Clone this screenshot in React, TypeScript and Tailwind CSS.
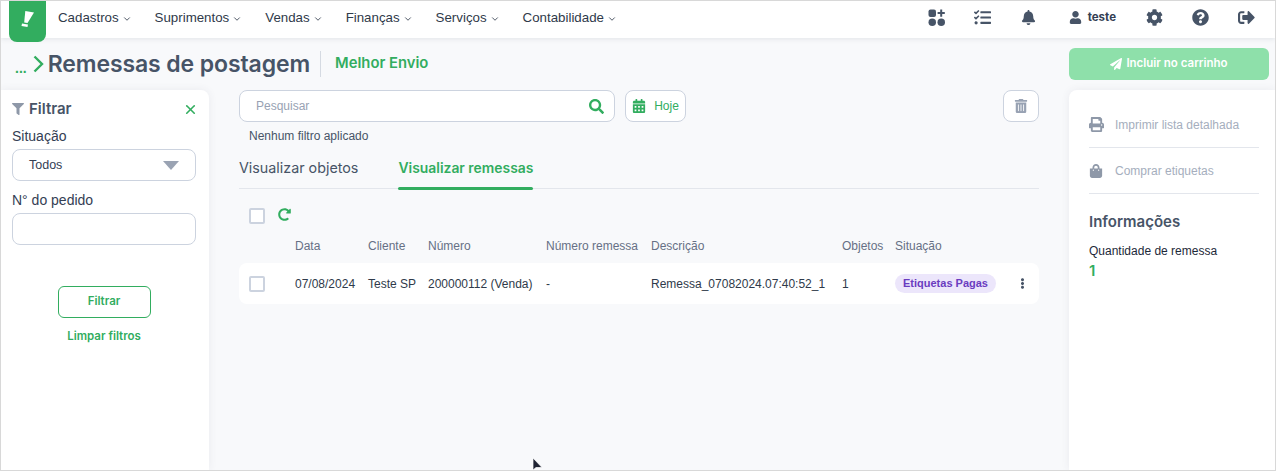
import { ChevronDown, X } from "lucide-react";
import {
  FaBell,
  FaCalendarAlt,
  FaCog,
  FaEllipsisV,
  FaFilter,
  FaPaperPlane,
  FaPrint,
  FaQuestionCircle,
  FaRedoAlt,
  FaSearch,
  FaShoppingBag,
  FaSignOutAlt,
  FaTasks,
  FaTrashAlt,
  FaUser,
} from "react-icons/fa";

const menu = ["Cadastros", "Suprimentos", "Vendas", "Finanças", "Serviços", "Contabilidade"];
const head = "font-['Inter',sans-serif]";
const columns = "grid grid-cols-[46px_73px_60px_118px_105px_191px_53px_122px_1fr] items-center";

function Logo() {
  return (
    <div className="self-start flex h-[41px] w-[37px] justify-center rounded-b-lg bg-[#32ad5f] pt-[9px]">
      <svg width="13" height="17" viewBox="0 0 13 17" fill="white">
        <path d="M4.3 1 L13 2.5 L6.5 13 L3.2 12.5 Z" />
        <path d="M1 13.6 L7 14.6 L6.5 17 L0.5 16 Z" />
      </svg>
    </div>
  );
}

function AppsIcon() {
  return (
    <svg width="17" height="17" viewBox="0 0 17 17" fill="#475467">
      <rect x="0.5" y="0.5" width="7.5" height="7.5" rx="2" />
      <rect x="0.5" y="9.5" width="7.5" height="7.5" rx="3.75" />
      <rect x="9.5" y="9.5" width="7.5" height="7.5" rx="3.75" />
      <path d="M12.2 0.5h2v2.6h2.6v2h-2.6v2.6h-2V5.1H9.6v-2h2.6z" />
    </svg>
  );
}

function Checkbox() {
  return <div className="h-4 w-4 border-2 border-[#ccd3df] bg-white rounded-[2px]" />;
}

export default function App() {
  return (
    <div className="relative flex h-[471px] w-[1276px] flex-col overflow-hidden border border-[#d8d8d8] bg-[#f8f9fb] font-['Liberation_Sans',sans-serif]">
      <header className="z-10 flex h-[37px] shrink-0 items-center bg-white pl-2 pr-[20px] shadow-[0_1px_5px_rgba(60,70,90,0.12)]">
        <Logo />
        <nav className="ml-3 mb-1 flex items-center gap-[23px] text-[13.3px] text-[#2f3a4a]">
          {menu.map((item) => (
            <span key={item} className="flex items-center gap-[3px]">
              {item}
              <ChevronDown size={10} className="mt-[2px]" />
            </span>
          ))}
        </nav>
        <div className="ml-auto mb-1 flex items-center text-[#475467]">
          <AppsIcon />
          <FaTasks size={17} className="ml-[29px]" />
          <FaBell size={15} className="ml-[30px]" />
          <FaUser size={13} className="ml-[33px]" />
          <span className={`ml-[6px] text-[11.5px] font-bold text-[#344054] ${head}`}>teste</span>
          <FaCog size={17} className="ml-[30px]" />
          <FaQuestionCircle size={17} className="ml-[29px]" />
          <FaSignOutAlt size={17} className="ml-[29px]" />
        </div>
      </header>

      <div className="flex h-[52px] shrink-0 items-center pl-[14px] pr-[6px]">
        <span className="mt-2 text-[14px] font-bold leading-none text-[#32ad5f]">...</span>
        <svg width="11" height="18" viewBox="0 0 11 18" fill="none" stroke="#32ad5f" strokeWidth="2.4" className="ml-[6px]">
          <path d="M1.5 1.5 L9 9 L1.5 16.5" />
        </svg>
        <h1 className={`ml-[4px] text-[23px] font-semibold tracking-[-0.1px] text-[#475467] ${head}`}>Remessas de postagem</h1>
        <div className="ml-[10px] h-[26px] w-px bg-[#d5dae2]" />
        <span className={`ml-[14px] mb-[2px] text-[14.8px] font-semibold text-[#32ad5f] ${head}`}>Melhor Envio</span>
        <button className={`ml-auto flex h-8 w-[200px] items-center justify-center gap-1 rounded-md bg-[#8ee0aa] text-[11.5px] font-semibold text-white ${head}`}>
          <FaPaperPlane size={12} />
          Incluir no carrinho
        </button>
      </div>

      <div className="flex min-h-0 flex-1">
        <aside className="flex w-[208px] shrink-0 flex-col rounded-tr-lg bg-white pl-[11px] pr-[13px] pt-2 shadow-[0_0_8px_rgba(60,70,90,0.08)]">
          <div className="flex items-center">
            <FaFilter size={12} className="text-[#8e98a8]" />
            <span className={`ml-[5px] text-[15px] font-semibold text-[#475467] ${head}`}>Filtrar</span>
            <X size={15} strokeWidth={2.6} className="ml-auto -mr-[2px] text-[#32ad5f]" />
          </div>
          <label className="mt-[5px] text-[14px] leading-5 text-[#344054]">Situação</label>
          <div className="mt-[3px] flex h-8 items-center rounded-lg border border-[#ccd3df] bg-white pl-4 pr-4 pt-[2px] text-[12.5px] text-[#344054]">
            Todos
            <svg width="16" height="9" viewBox="0 0 16 9" fill="#9aa3b3" className="ml-auto">
              <path d="M0 0H16L8 9Z" />
            </svg>
          </div>
          <label className="mt-[9px] text-[14px] leading-5 text-[#344054]">N° do pedido</label>
          <input className="mt-[3px] h-8 rounded-lg border border-[#ccd3df] bg-white" />
          <button className={`mx-auto mt-[41px] h-8 w-[93px] rounded-md border border-[#32ad5f] text-[11.5px] font-semibold text-[#32ad5f] ${head}`}>
            Filtrar
          </button>
          <a className={`mt-[10px] text-center text-[11.5px] font-semibold text-[#32ad5f] ${head}`}>Limpar filtros</a>
        </aside>

        <main className="ml-[30px] w-[800px] shrink-0">
          <div className="flex items-center">
            <div className="flex h-8 w-[376px] items-center rounded-lg border border-[#ccd3df] bg-white pl-4 pr-[10px] text-[12px] text-[#98a2b3]">
              Pesquisar
              <FaSearch size={15} className="ml-auto text-[#32ad5f]" />
            </div>
            <button className="ml-[10px] flex h-8 w-[61px] items-center justify-center gap-2 rounded-lg border border-[#ccd3df] bg-white text-[12px] text-[#32ad5f]">
              <FaCalendarAlt size={14} />
              Hoje
            </button>
            <button className="ml-auto flex h-8 w-9 items-center justify-center rounded-lg border border-[#ccd3df] bg-white">
              <FaTrashAlt size={14} className="text-[#98a2b3]" />
            </button>
          </div>
          <p className="mt-[6px] pl-[10px] text-[12px] leading-[16px] text-[#475467]">Nenhum filtro aplicado</p>

          <div className={`mt-[6px] flex h-[39px] items-stretch border-b border-[#e3e6ec] ${head}`}>
            <span className="flex items-center pb-[2px] text-[14.3px] text-[#475467]">Visualizar objetos</span>
            <span className="relative ml-10 flex items-center pb-[2px] text-[13.9px] font-semibold text-[#32ad5f]">
              Visualizar remessas
              <span className="absolute -bottom-[2px] left-0 h-[3px] w-full rounded-sm bg-[#32ad5f]" />
            </span>
          </div>

          <div className="mt-[19px] flex items-center pl-[10px]">
            <Checkbox />
            <FaRedoAlt size={13} className="ml-[13px] -mt-[3px] text-[#32ad5f]" />
          </div>

          <div className={`${columns} mt-[13px] pl-[10px] text-[12px] text-[#667085]`}>
            <span />
            <span>Data</span>
            <span>Cliente</span>
            <span>Número</span>
            <span>Número remessa</span>
            <span>Descrição</span>
            <span>Objetos</span>
            <span>Situação</span>
          </div>

          <div className={`${columns} mt-2 h-[41px] rounded-lg bg-white pl-[10px] text-[12px] text-[#2f3a4a]`}>
            <Checkbox />
            <span>07/08/2024</span>
            <span>Teste SP</span>
            <span>200000112 (Venda)</span>
            <span>-</span>
            <span>Remessa_07082024.07:40:52_1</span>
            <span>1</span>
            <span className="w-[101px] rounded-full bg-[#ece6fb] py-[1px] text-center text-[11px] font-bold text-[#6a3cc0]">Etiquetas Pagas</span>
            <FaEllipsisV size={11} className="text-[#475467]" />
          </div>
        </main>

        <aside className="ml-[30px] flex flex-1 flex-col rounded-tl-lg bg-white pl-5 pr-4 shadow-[0_0_8px_rgba(60,70,90,0.08)]">
          <div className="flex h-[58px] items-center border-b border-[#e3e6ec] pt-[12px] text-[12px] text-[#a5aebd]">
            <FaPrint size={15} className="text-[#8e98a8]" />
            <span className="ml-[11px]">Imprimir lista detalhada</span>
          </div>
          <div className="flex h-[46px] items-center border-b border-[#e3e6ec] text-[12px] text-[#a5aebd]">
            <FaShoppingBag size={14} className="text-[#8e98a8]" />
            <span className="ml-3">Comprar etiquetas</span>
          </div>
          <h2 className={`mt-[18px] text-[15px] font-semibold leading-5 text-[#475467] ${head}`}>Informações</h2>
          <p className="mt-[11px] text-[12px] leading-4 text-[#1d2939]">Quantidade de remessa</p>
          <p className={`mt-[2px] text-[15px] font-semibold leading-5 text-[#32ad5f] ${head}`}>1</p>
        </aside>
      </div>

      <svg width="12" height="14" viewBox="0 0 12 14" className="absolute left-[531px] top-[456px]" fill="#1f2433" stroke="white" strokeWidth="0.7">
        <path d="M1 1 L1 13 L4 10.5 L10 10.5 Z" />
      </svg>
    </div>
  );
}
